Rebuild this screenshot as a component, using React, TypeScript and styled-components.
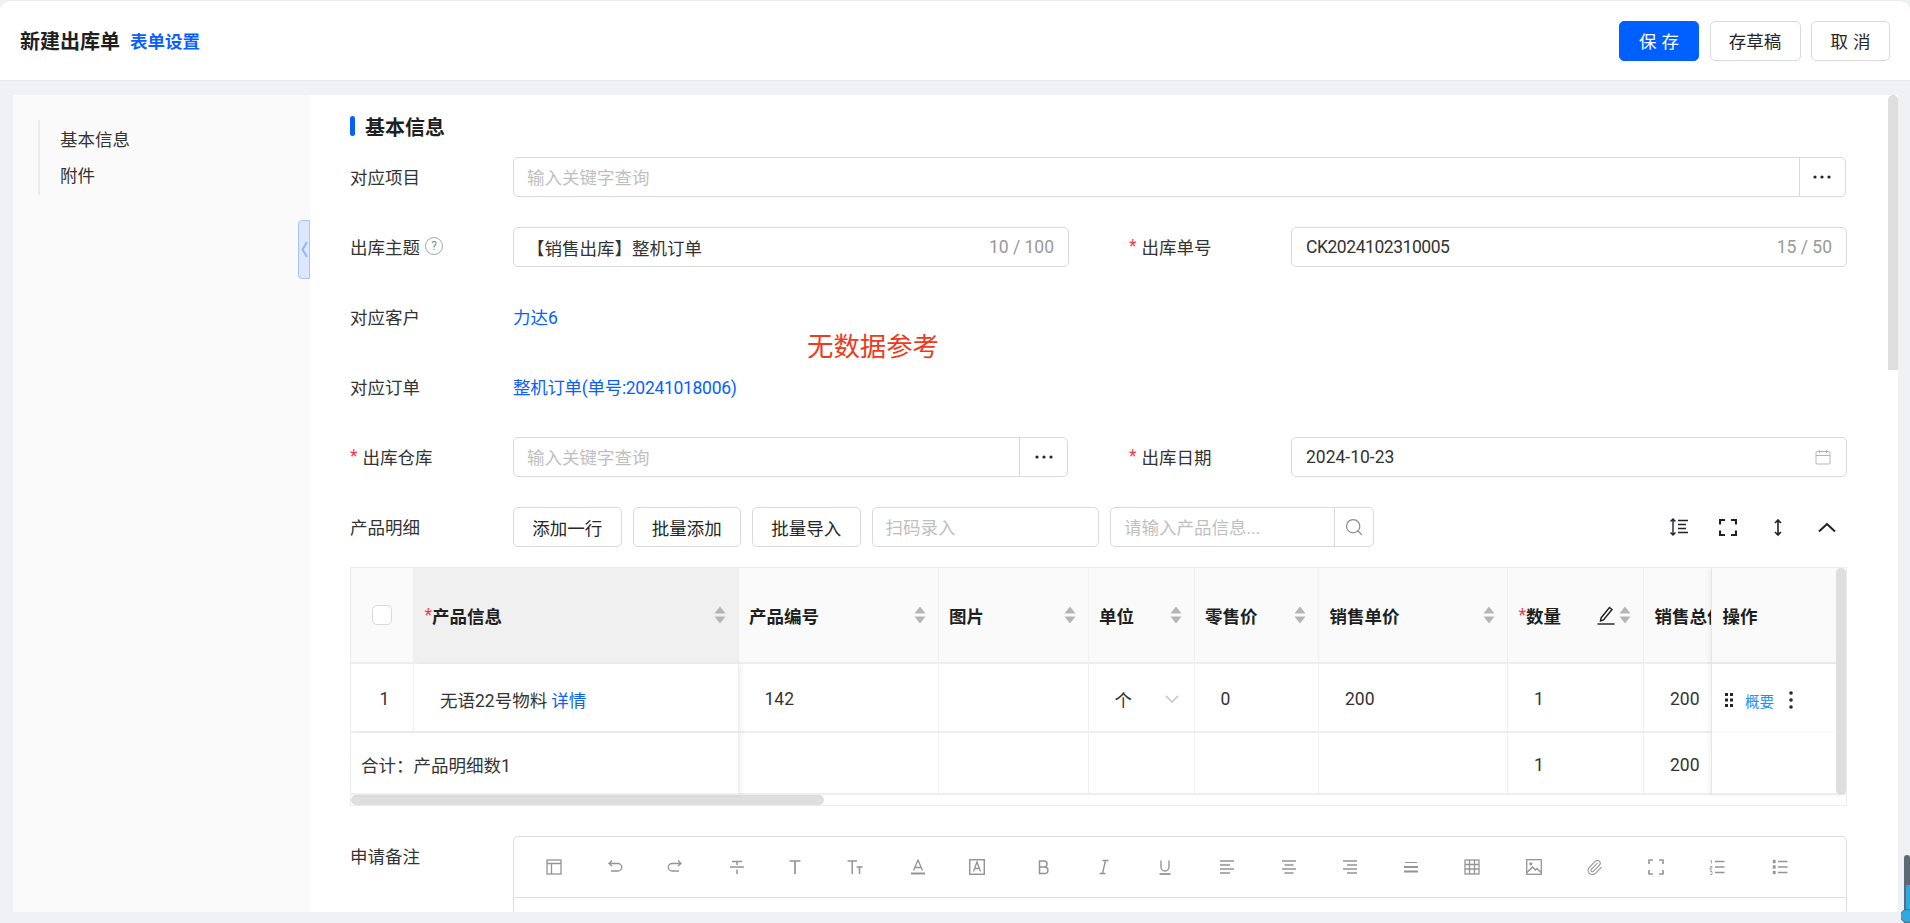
import React from "react";
import styled, { createGlobalStyle } from "styled-components";
import { Paperclip, Search } from "lucide-react";

const Global = createGlobalStyle`
  html, body { margin: 0; padding: 0; width: 100%; height: 923px; overflow: hidden; background: #eff1f5; }
  body { font-family: Roboto, "Noto Sans CJK SC", sans-serif; font-size: 17.5px; color: #262626; }
  * { box-sizing: border-box; }
`;

const Page = styled.div`
  position: relative;
  width: 1910px;
  height: 923px;
  overflow: hidden;
`;
const Header = styled.header`
  height: 81px;
  background: #fff;
  border-top: 1px solid #ebebeb;
  border-bottom: 1px solid #e5e7eb;
  border-radius: 10px 10px 0 0;
  display: flex;
  align-items: center;
  justify-content: space-between;
  padding: 0 20px;
`;
const TitleGroup = styled.div`
  display: flex;
  align-items: center;
  gap: 10px;
`;
const Title = styled.h1`
  margin: 0;
  font-size: 20px;
  font-weight: 700;
  color: #1f1f1f;
`;
const TitleLink = styled.a`
  font-size: 17.5px;
  font-weight: 700;
  color: #0a5fff;
`;
const Actions = styled.div`
  display: flex;
  gap: 10.5px;
`;
const Button = styled.button<{ $w: number; $primary?: boolean; $spaced?: boolean }>`
  width: ${(p) => p.$w}px;
  height: 40px;
  border-radius: 5px;
  border: 1px solid ${(p) => (p.$primary ? "#0060ff" : "#d9d9d9")};
  background: ${(p) => (p.$primary ? "#0060ff" : "#fff")};
  color: ${(p) => (p.$primary ? "#fff" : "#262626")};
  font: inherit;
  letter-spacing: ${(p) => (p.$spaced ? "5px" : "0")};
  text-indent: ${(p) => (p.$spaced ? "5px" : "0")};
  padding: 0;
  flex: none;
`;
const Main = styled.main`
  display: flex;
  height: 817px;
  margin: 14px 12px 0 13px;
  overflow: hidden;
`;
const Sidebar = styled.aside`
  position: relative;
  flex: 0 0 297px;
  background: #fafafa;
  padding: 25px 0 0 25px;
`;
const Nav = styled.nav`
  border-left: 2px solid #ebebeb;
  padding: 0 0 2px 20px;
  height: 75px;
  display: flex;
  flex-direction: column;
  justify-content: space-around;
  color: #333;
`;
const Handle = styled.div`
  position: absolute;
  top: 125px;
  right: 0;
  width: 12px;
  height: 59px;
  background: #dce8ff;
  border: 1px solid #a4c4ff;
  border-radius: 4px 0 0 4px;
  display: flex;
  align-items: center;
  justify-content: center;
`;
const Content = styled.section`
  position: relative;
  flex: 1;
  background: #fff;
  padding: 21px 51px 0 40px;
  overflow: hidden;
`;
const PageThumb = styled.div`
  position: absolute;
  top: 0;
  right: 0;
  width: 10px;
  height: 275px;
  background: #dedede;
  border-radius: 5px 5px 0 0;
`;
const SectionTitle = styled.h2`
  margin: 0 0 21px;
  height: 20px;
  display: flex;
  align-items: center;
  gap: 10px;
  font-size: 20px;
  font-weight: 700;
  color: #1f1f1f;
  &::before {
    content: "";
    width: 5px;
    height: 20px;
    border-radius: 3px;
    background: #0a5fff;
  }
`;
const Form = styled.div`
  display: flex;
  flex-direction: column;
  gap: 30px;
`;
const Row = styled.div`
  display: grid;
  grid-template-columns: 163px 556px 60px 162px 556px;
  align-items: center;
  height: 40px;
`;
const Label = styled.label`
  display: flex;
  align-items: center;
  color: #333;
  padding-bottom: 2px;
`;
const Required = styled.span`
  color: #f5394a;
  margin-right: 5px;
`;
const Hint = styled.span`
  width: 18px;
  height: 18px;
  margin-left: 5px;
  border: 1px solid #a6a6a6;
  border-radius: 50%;
  color: #8c8c8c;
  font-size: 12px;
  line-height: 16px;
  text-align: center;
`;
const Field = styled.div<{ $wide?: boolean; $pad?: number }>`
  height: 40px;
  border: 1px solid #d9d9d9;
  border-radius: 5px;
  background: #fff;
  display: flex;
  align-items: center;
  padding-left: ${(p) => p.$pad ?? 13}px;
  overflow: hidden;
  ${(p) => (p.$wide ? "grid-column: 2 / -1; margin-right: 1.5px;" : "")}
`;
const WarehouseField = styled(Field)`
  margin-right: 1px;
`;
const Placeholder = styled.span`
  color: #bfbfbf;
  flex: 1;
  padding-bottom: 2px;
`;
const Value = styled.span`
  flex: 1;
  color: #333;
`;
const CodeValue = styled(Value)`
  letter-spacing: -0.45px;
`;
const Count = styled.span`
  color: #999;
  padding-right: 14px;
`;
const Addon = styled.span`
  flex: 0 0 46px;
  height: 100%;
  border-left: 1px solid #d9d9d9;
  display: flex;
  align-items: center;
  justify-content: center;
`;
const WarehouseAddon = styled(Addon)`
  flex-basis: 48px;
`;
const DateIcon = styled.span`
  padding-right: 15px;
  display: flex;
  color: #b3b3b3;
`;
const LinkText = styled.a`
  color: #0a5fff;
  white-space: nowrap;
  padding-bottom: 2px;
`;
const OrderLink = styled(LinkText)`
  letter-spacing: -0.3px;
`;
const Annotation = styled.div`
  position: absolute;
  left: 497px;
  top: 235px;
  font-size: 26.4px;
  line-height: 34px;
  color: #ee3a20;
`;
const Toolbar = styled.div`
  display: flex;
  align-items: center;
  height: 40px;
  margin-top: 30px;
  gap: 11px;
`;
const ToolbarLabel = styled(Label)`
  width: 152px;
`;
const ScanField = styled(Field)`
  width: 227.5px;
  flex: none;
`;
const SearchField = styled(Field)`
  width: 264px;
  flex: none;
`;
const SearchAddon = styled(Addon)`
  flex-basis: 39px;
  color: #8c8c8c;
`;
const ViewTools = styled.div`
  margin-left: auto;
  padding-right: 9.7px;
  display: flex;
  align-items: center;
  gap: 29.5px;
  color: #1f2329;
`;
const ToolBox = styled.span`
  width: 20px;
  height: 20px;
  display: flex;
  align-items: center;
  justify-content: center;
`;
const TableBox = styled.div`
  position: relative;
  margin-top: 20px;
  width: 1497px;
  border: 1px solid #ececec;
  overflow: hidden;
`;
const Grid = styled.div`
  display: grid;
  grid-template-columns: 63px 324.5px 200px 150px 106px 124.5px 189px 136px 68px 1fr;
  grid-template-rows: 96px 69px 62px;
`;
const Cell = styled.div`
  display: flex;
  align-items: center;
  min-width: 0;
  overflow: hidden;
  white-space: nowrap;
  padding: 3px 0 0 26px;
  color: #333;
  border-right: 1px solid #f0f0f0;
  border-bottom: 2px solid #eeeeee;
  background: #fff;
`;
const HeadCell = styled(Cell)<{ $active?: boolean }>`
  background: ${(p) => (p.$active ? "#f0f0f0" : "#fafafa")};
  padding: 0 12px 0 10.5px;
  font-weight: 700;
  color: #1f1f1f;
`;
const CheckCell = styled(HeadCell)`
  justify-content: center;
  padding: 0;
`;
const CheckBox = styled.span`
  width: 20px;
  height: 20px;
  background: #fff;
  border: 1px solid #d9d9d9;
  border-radius: 5px;
`;
const HeadStar = styled.span`
  color: #f5394a;
  font-weight: 400;
`;
const SortIcons = styled.svg`
  margin-left: auto;
  flex: none;
`;
const EditIcon = styled.svg`
  margin-left: auto;
  flex: none;
`;
const QtySort = styled.svg`
  margin-left: 4.5px;
  flex: none;
`;
const FixedLeft = styled(Cell)`
  position: relative;
  box-shadow: 3px 0 5px rgba(0, 0, 0, 0.05);
  border-right: 1px solid #ececec;
`;
const IndexCell = styled(Cell)`
  justify-content: center;
  padding: 3px 0 0 5px;
`;
const InlineLink = styled(LinkText)`
  margin-left: 4px;
  padding-bottom: 0;
`;
const SummaryCell = styled(FixedLeft)`
  grid-column: span 2;
  padding: 2px 0 0 10px;
`;
const FixedRight = styled(Cell)`
  position: relative;
  box-shadow: -3px 0 5px rgba(0, 0, 0, 0.05);
  padding-left: 13px;
  border-right: 0;
  border-bottom: 0;
`;
const FixedRightHead = styled(HeadCell)`
  position: relative;
  box-shadow: -3px 0 5px rgba(0, 0, 0, 0.05);
  border-right: 0;
`;
const FixedRightEmpty = styled(FixedRight)`
  border-bottom: 2px solid #eeeeee;
`;
const Ops = styled.a`
  font-size: 14.5px;
  color: #1890ff;
  margin: 0 15px 0 12px;
`;
const UnitChevron = styled.svg`
  margin-left: auto;
  margin-right: 15px;
  color: #c4c4c4;
  flex: none;
`;
const HTrack = styled.div`
  height: 10px;
`;
const HThumb = styled.div`
  width: 473px;
  height: 10px;
  background: #dedede;
  border-radius: 5px;
`;
const VThumb = styled.div`
  position: absolute;
  top: 0;
  right: 0;
  width: 10px;
  height: 227px;
  background: #dedede;
  border-radius: 5px;
`;
const EditorRow = styled.div`
  display: flex;
  margin-top: 30px;
`;
const EditorLabel = styled(Label)`
  flex: 0 0 163px;
  height: 40px;
`;
const Editor = styled.div`
  flex: 1;
  height: 200px;
  border: 1px solid #dcdcdc;
  border-radius: 5px 5px 0 0;
`;
const EditorTools = styled.div`
  height: 61px;
  border-bottom: 1px solid #dcdcdc;
  display: flex;
  align-items: center;
  padding-left: 29.7px;
  color: #949494;
`;
const EditorTool = styled.span<{ $offset: number }>`
  flex: 0 0 20px;
  margin-left: ${(p) => p.$offset}px;
  display: flex;
  align-items: center;
  justify-content: center;
`;
const Gauge = styled.svg`
  position: absolute;
  right: 0;
  bottom: 0;
`;

const Triangles = () => (
  <>
    <path d="M6 1.5l5.5 7H.5z" />
    <path d="M6 18.5l5.5-7H.5z" />
  </>
);

const Sort = () => (
  <SortIcons width="12" height="20" viewBox="0 0 12 20" fill="#b5b5b5">
    <Triangles />
  </SortIcons>
);

const Dots = () => (
  <svg width="18" height="4" viewBox="0 0 18 4" fill="#262626">
    <circle cx="2" cy="2" r="1.6" />
    <circle cx="9" cy="2" r="1.6" />
    <circle cx="16" cy="2" r="1.6" />
  </svg>
);

const CalendarIcon = () => (
  <svg width="16" height="16" viewBox="0 0 16 16" fill="none" stroke="currentColor" strokeWidth="1">
    <rect x="1" y="2.5" width="14" height="12.5" rx="1" />
    <path d="M1 6.5h14M4.5 1v3M11.5 1v3" />
  </svg>
);

const s = { fill: "none", stroke: "currentColor", strokeWidth: 1.3 };

const toolDrawings: { offset: number; icon: React.ReactNode }[] = [
  { offset: 0, icon: <g {...s}><rect x="1" y="1" width="14" height="14" /><path d="M1 4.5h14M5.5 4.5V15" /></g> },
  { offset: 41.3, icon: <g {...s}><path d="M5 1.5 2 4.5l3 2.5M2.5 4.5H11a3.6 3.6 0 0 1 0 7.5H4" /></g> },
  { offset: 40, icon: <g {...s}><path d="M11 1.5l3 3-3 2.5M13.5 4.5H5a3.6 3.6 0 0 0 0 7.5h7" /></g> },
  { offset: 42, icon: <g {...s}><path d="M3 2.5h10M8 2.5V6M1 8h14M8 10.5V15" strokeWidth="1.5" /></g> },
  { offset: 38, icon: <g {...s}><path d="M2.5 2h11M8 2v13" strokeWidth="1.7" /></g> },
  { offset: 40, icon: <g {...s}><path d="M0.5 2h9.5M5.2 2v13M9.5 8H15.5M12.5 8v7" strokeWidth="1.5" /></g> },
  { offset: 43.5, icon: <g {...s}><path d="M3.5 11.5 8 1l4.5 10.5M5 8.5h6" /><path d="M1 14.5h14" strokeWidth="2" /></g> },
  { offset: 38.5, icon: <g {...s}><rect x="0.7" y="0.7" width="14.6" height="14.6" strokeWidth="1.5" /><path d="M4.5 12.5 8 3l3.5 9.5M5.6 9.5h4.8" /></g> },
  { offset: 46.5, icon: <g {...s}><path d="M4.5 2H9a3 3 0 0 1 0 6H4.5zM4.5 8H9.6a3.2 3.2 0 0 1 0 6.6H4.5z" strokeWidth="1.5" /></g> },
  { offset: 41, icon: <g {...s}><path d="M6.5 1.5h6M3.5 14.5h6M9.5 1.5 6.5 14.5" strokeWidth="1.4" /></g> },
  { offset: 40.5, icon: <g {...s}><path d="M4 1.5V8a4 4 0 0 0 8 0V1.5" strokeWidth="1.4" /><path d="M2.5 15h11" strokeWidth="1.8" /></g> },
  { offset: 42, icon: <g {...s}><path d="M1 2h14M1 6h10M1 10h14M1 14h10" strokeWidth="1.5" /></g> },
  { offset: 42, icon: <g {...s}><path d="M1 2h14M3.5 6h9M1 10h14M3.5 14h9" strokeWidth="1.5" /></g> },
  { offset: 41, icon: <g {...s}><path d="M1 2h14M5 6h10M1 10h14M5 14h10" strokeWidth="1.5" /></g> },
  { offset: 41, icon: <g {...s}><path d="M2 3.5h12" strokeWidth="1" /><path d="M1 8h14M1 12.5h14" strokeWidth="2" /></g> },
  { offset: 41, icon: <g {...s}><rect x="1" y="1" width="14" height="14" /><path d="M1 5.5h14M1 10h14M5.5 1v14M10.5 1v14" /></g> },
  { offset: 42, icon: <g {...s}><rect x="0.7" y="0.7" width="14.6" height="14.6" /><circle cx="4.8" cy="4.8" r="1" /><path d="M1 13.5 6.5 8l3 3 1.5-1.5 4 4" /></g> },
  { offset: 41, icon: null },
  { offset: 41, icon: <g {...s}><path d="M1 5V1h4M11 1h4v4M1 11v4h4M15 11v4h-4" strokeWidth="1.6" /></g> },
  { offset: 41, icon: <g {...s}><path d="M1.5 1.5h1v3M1 7.5h2v1.5H1V11h2M1 12.5h2v3H1" strokeWidth="0.8" /><path d="M6 2.5h9.5M6 8h9.5M6 13.5h9.5" /></g> },
  { offset: 43, icon: <g {...s}><path d="M1 1h2.4v3H1zM1 6.5h2.4v3H1zM1 12h2.4v3H1z" fill="currentColor" strokeWidth="0.4" /><path d="M6 2.5h9.5M6 8h9.5M6 13.5h9.5" /></g> },
];

export default function App() {
  return (
    <Page>
      <Global />
      <Header>
        <TitleGroup>
          <Title>新建出库单</Title>
          <TitleLink>表单设置</TitleLink>
        </TitleGroup>
        <Actions>
          <Button $w={80} $primary $spaced>保存</Button>
          <Button $w={91}>存草稿</Button>
          <Button $w={79} $spaced>取消</Button>
        </Actions>
      </Header>
      <Main>
        <Sidebar>
          <Nav>
            <span>基本信息</span>
            <span>附件</span>
          </Nav>
          <Handle>
            <svg width="7" height="17" viewBox="0 0 7 17" fill="none" stroke="#8fb5ff" strokeWidth="2">
              <path d="M6 1 1.5 8.5 6 16" />
            </svg>
          </Handle>
        </Sidebar>
        <Content>
          <PageThumb />
          <SectionTitle>基本信息</SectionTitle>
          <Form>
            <Row>
              <Label>对应项目</Label>
              <Field $wide>
                <Placeholder>输入关键字查询</Placeholder>
                <Addon><Dots /></Addon>
              </Field>
            </Row>
            <Row>
              <Label>出库主题<Hint>?</Hint></Label>
              <Field>
                <Value>【销售出库】整机订单</Value>
                <Count>10 / 100</Count>
              </Field>
              <span />
              <Label><Required>*</Required>出库单号</Label>
              <Field $pad={14}>
                <CodeValue>CK2024102310005</CodeValue>
                <Count>15 / 50</Count>
              </Field>
            </Row>
            <Row>
              <Label>对应客户</Label>
              <LinkText>力达6</LinkText>
            </Row>
            <Row>
              <Label>对应订单</Label>
              <OrderLink>整机订单(单号:20241018006)</OrderLink>
            </Row>
            <Row>
              <Label><Required>*</Required>出库仓库</Label>
              <WarehouseField>
                <Placeholder>输入关键字查询</Placeholder>
                <WarehouseAddon><Dots /></WarehouseAddon>
              </WarehouseField>
              <span />
              <Label><Required>*</Required>出库日期</Label>
              <Field $pad={14}>
                <Value>2024-10-23</Value>
                <DateIcon><CalendarIcon /></DateIcon>
              </Field>
            </Row>
          </Form>
          <Toolbar>
            <ToolbarLabel>产品明细</ToolbarLabel>
            <Button $w={108.5}>添加一行</Button>
            <Button $w={108.5}>批量添加</Button>
            <Button $w={108.5}>批量导入</Button>
            <ScanField><Placeholder>扫码录入</Placeholder></ScanField>
            <SearchField>
              <Placeholder>请输入产品信息...</Placeholder>
              <SearchAddon><Search size={20} strokeWidth={1.5} /></SearchAddon>
            </SearchField>
            <ViewTools>
              <ToolBox>
                <svg width="20" height="18" viewBox="0 0 20 18" fill="none" stroke="currentColor" strokeWidth="1.4">
                  <path d="M4 1v16M1.5 3.5 4 1l2.5 2.5M1.5 14.5 4 17l2.5-2.5" />
                  <path d="M9 2.5h10M9 6.5h8M9 10.5h8M9 14.5h10" />
                </svg>
              </ToolBox>
              <ToolBox>
                <svg width="18" height="17" viewBox="0 0 18 17" fill="none" stroke="currentColor" strokeWidth="2.2">
                  <path d="M1 5.5V1h5M12 1h5v4.5M1 11.5V16h5M17 11.5V16h-5" />
                </svg>
              </ToolBox>
              <ToolBox>
                <svg width="8" height="17" viewBox="0 0 8 17" fill="none" stroke="currentColor" strokeWidth="1.6">
                  <path d="M4 1v15M1 4l3-3 3 3M1 13l3 3 3-3" />
                </svg>
              </ToolBox>
              <ToolBox>
                <svg width="18" height="9" viewBox="0 0 18 9" fill="none" stroke="currentColor" strokeWidth="2">
                  <path d="M1 8.5 9 1l8 7.5" />
                </svg>
              </ToolBox>
            </ViewTools>
          </Toolbar>
          <TableBox>
            <Grid>
              <CheckCell><CheckBox /></CheckCell>
              <HeadCell $active><HeadStar>*</HeadStar>产品信息<Sort /></HeadCell>
              <HeadCell>产品编号<Sort /></HeadCell>
              <HeadCell>图片<Sort /></HeadCell>
              <HeadCell>单位<Sort /></HeadCell>
              <HeadCell>零售价<Sort /></HeadCell>
              <HeadCell>销售单价<Sort /></HeadCell>
              <HeadCell>
                <HeadStar>*</HeadStar>数量
                <EditIcon width="18" height="20" viewBox="0 0 18 20" fill="none" stroke="#1f1f1f" strokeWidth="1.4">
                  <path d="M4 13 12.5 2.5l2.5 2L6.5 15l-3 1z" />
                  <path d="M0.5 19h17" />
                </EditIcon>
                <QtySort width="12" height="20" viewBox="0 0 12 20" fill="#b5b5b5">
                  <Triangles />
                </QtySort>
              </HeadCell>
              <HeadCell>销售总价</HeadCell>
              <FixedRightHead>操作</FixedRightHead>

              <IndexCell>1</IndexCell>
              <FixedLeft>无语22号物料<InlineLink>详情</InlineLink></FixedLeft>
              <Cell>142</Cell>
              <Cell />
              <Cell>
                个
                <UnitChevron width="14" height="8" viewBox="0 0 14 8" fill="none" stroke="currentColor" strokeWidth="1.5">
                  <path d="M1 1l6 6 6-6" />
                </UnitChevron>
              </Cell>
              <Cell>0</Cell>
              <Cell>200</Cell>
              <Cell>1</Cell>
              <Cell>200</Cell>
              <FixedRight>
                <svg width="8" height="14" viewBox="0 0 8 14" fill="#262626">
                  <rect x="0" y="0" width="3" height="3" />
                  <rect x="5" y="0" width="3" height="3" />
                  <rect x="0" y="5.5" width="3" height="3" />
                  <rect x="5" y="5.5" width="3" height="3" />
                  <rect x="0" y="11" width="3" height="3" />
                  <rect x="5" y="11" width="3" height="3" />
                </svg>
                <Ops>概要</Ops>
                <svg width="4" height="18" viewBox="0 0 4 18" fill="#262626">
                  <circle cx="2" cy="2" r="1.8" />
                  <circle cx="2" cy="9" r="1.8" />
                  <circle cx="2" cy="16" r="1.8" />
                </svg>
              </FixedRight>

              <SummaryCell>合计：产品明细数1</SummaryCell>
              <Cell />
              <Cell />
              <Cell />
              <Cell />
              <Cell />
              <Cell>1</Cell>
              <Cell>200</Cell>
              <FixedRightEmpty />
            </Grid>
            <HTrack><HThumb /></HTrack>
            <VThumb />
          </TableBox>
          <EditorRow>
            <EditorLabel>申请备注</EditorLabel>
            <Editor>
              <EditorTools>
                {toolDrawings.map((d, i) => (
                  <EditorTool key={i} $offset={d.offset}>
                    {d.icon === null ? (
                      <Paperclip size={17} strokeWidth={1.5} />
                    ) : (
                      <svg width="16" height="16" viewBox="0 0 16 16">{d.icon}</svg>
                    )}
                  </EditorTool>
                ))}
              </EditorTools>
            </Editor>
          </EditorRow>
          <Annotation>无数据参考</Annotation>
        </Content>
      </Main>
      <Gauge width="9" height="69" viewBox="0 0 9 69">
        <path d="M3 4a3 3 0 0 1 6 0v65H3z" fill="#5d6a74" />
        <path d="M5 31h4v38H5z" fill="#2fa9e2" />
        <circle cx="6" cy="62" r="6.5" fill="#2fa9e2" stroke="#5d6a74" strokeWidth="1" />
      </Gauge>
    </Page>
  );
}
